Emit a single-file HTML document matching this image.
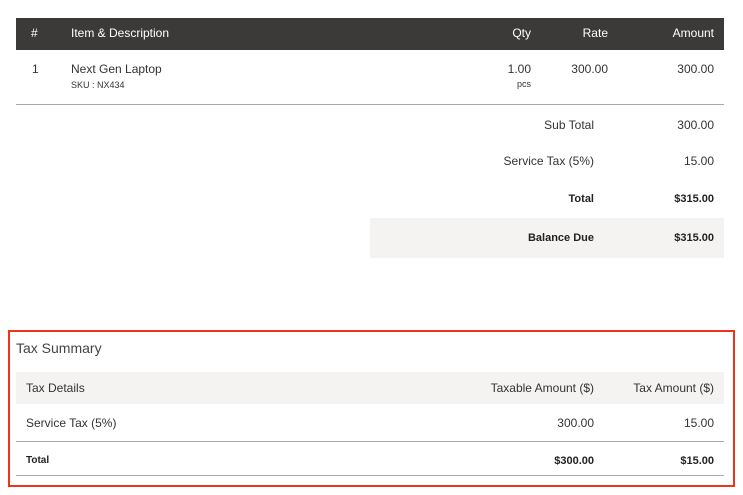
<!DOCTYPE html>
<html><head><style>
body{margin:0;width:743px;height:495px;background:#fff;font-family:"Liberation Sans",sans-serif;color:#333;position:relative;overflow:hidden}
.a{position:absolute;white-space:nowrap;font-size:12px}
.r{text-align:right}
.w{color:#fff}
.b{font-weight:bold;font-size:11px;color:#222}
</style></head><body>
<div style="position:absolute;left:16px;top:18px;width:708px;height:32px;background:#3b3a38"></div>
<div class="a w" style="left:31px;top:26px">#</div>
<div class="a w" style="left:71px;top:26px">Item &amp; Description</div>
<div class="a w r" style="right:212px;top:26px">Qty</div>
<div class="a w r" style="right:135px;top:26px">Rate</div>
<div class="a w r" style="right:29px;top:26px">Amount</div>
<div class="a" style="left:32px;top:62px">1</div>
<div class="a" style="left:71px;top:62px">Next Gen Laptop</div>
<div class="a" style="left:71px;top:80px;font-size:9px">SKU : NX434</div>
<div class="a r" style="right:212px;top:62px">1.00</div>
<div class="a r" style="right:212px;top:79px;font-size:9px">pcs</div>
<div class="a r" style="right:135px;top:62px">300.00</div>
<div class="a r" style="right:29px;top:62px">300.00</div>
<div style="position:absolute;left:16px;top:104px;width:708px;height:1px;background:#aaa"></div>
<div class="a r" style="right:149px;top:118px">Sub Total</div>
<div class="a r" style="right:29px;top:118px">300.00</div>
<div class="a r" style="right:149px;top:154px">Service Tax (5%)</div>
<div class="a r" style="right:29px;top:154px">15.00</div>
<div class="a r b" style="right:149px;top:193px">Total</div>
<div class="a r b" style="right:29px;top:193px">$315.00</div>
<div style="position:absolute;left:370px;top:218px;width:354px;height:40px;background:#f4f3f1"></div>
<div class="a r b" style="right:149px;top:232px">Balance Due</div>
<div class="a r b" style="right:29px;top:232px">$315.00</div>
<div style="position:absolute;left:8px;top:330px;width:723px;height:153px;border:2px solid #f0341c"></div>
<div class="a" style="left:16px;top:340px;font-size:14px;color:#444">Tax Summary</div>
<div style="position:absolute;left:16px;top:372px;width:708px;height:32px;background:#f4f3f1"></div>
<div class="a" style="left:26px;top:381px">Tax Details</div>
<div class="a r" style="right:149px;top:381px">Taxable Amount ($)</div>
<div class="a r" style="right:29px;top:381px">Tax Amount ($)</div>
<div class="a" style="left:26px;top:416px">Service Tax (5%)</div>
<div class="a r" style="right:149px;top:416px">300.00</div>
<div class="a r" style="right:29px;top:416px">15.00</div>
<div style="position:absolute;left:16px;top:441px;width:708px;height:1px;background:#aaa"></div>
<div class="a b" style="left:26px;top:455px;font-size:10px">Total</div>
<div class="a r b" style="right:149px;top:455px">$300.00</div>
<div class="a r b" style="right:29px;top:455px">$15.00</div>
<div style="position:absolute;left:16px;top:475px;width:708px;height:1px;background:#aaa"></div>
</body></html>
